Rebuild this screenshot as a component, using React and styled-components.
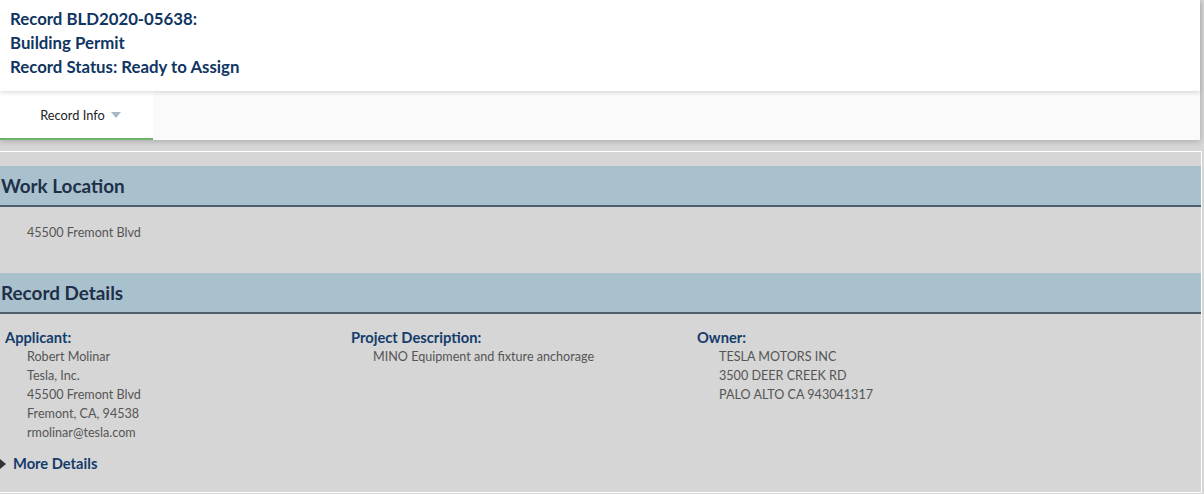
import React from 'react'
import styled, { createGlobalStyle } from 'styled-components'

const Global = createGlobalStyle`
  html, body { margin: 0; padding: 0; }
  body {
    background: #d6d6d6;
    font-family: Lato, "Open Sans", "Liberation Sans", sans-serif;
  }
`

const Page = styled.div`
  width: 1204px;
  height: 494px;
  overflow: hidden;
`

const TopCard = styled.div`
  width: 1200px;
  background: #fff;
  box-shadow: 0 1px 6px rgba(0, 0, 0, 0.22);
  position: relative;
  z-index: 2;
`

const Header = styled.div`
  height: 91px;
  box-sizing: border-box;
  padding: 7px 10px 0;
  background: #fff;
  box-shadow: 0 2px 4px rgba(0, 0, 0, 0.12);
  position: relative;
`

const HeaderLine = styled.div`
  font-size: 16.8px;
  line-height: 24px;
  font-weight: 700;
  color: #0f3562;
`

const TabBar = styled.div`
  display: flex;
  height: 49px;
  background: #fafafa;
`

const Tab = styled.div`
  width: 153px;
  box-sizing: border-box;
  display: flex;
  align-items: center;
  justify-content: center;
  gap: 6px;
  padding-left: 8px;
  background: ${(p) => (p.active ? '#fff' : 'transparent')};
  border-bottom: 2px solid ${(p) => (p.active ? '#6cb26e' : 'transparent')};
  font-size: 12.8px;
  color: #222;
`

const Caret = styled.span`
  width: 0;
  height: 0;
  border-left: 5px solid transparent;
  border-right: 5px solid transparent;
  border-top: 6px solid #a8b9c6;
  margin-top: 1px;
`

const Panel = styled.div`
  margin-top: 11px;
  width: 1202px;
  box-sizing: border-box;
  border: 1px solid #fff;
  border-left: none;
  padding-top: 14px;
  height: 342px;
`

const SectionHead = styled.div`
  height: 39px;
  background: #a9c0cd;
  border-bottom: 2px solid #4b5f6e;
  display: flex;
  align-items: center;
  padding-left: 1px;
  font-size: 18.9px;
  font-weight: 700;
  color: #1d3048;
`

const LocationBody = styled.div`
  padding: 16px 0 31px 27px;
  font-size: 12.6px;
  line-height: 19px;
  color: #555;
`

const Columns = styled.div`
  display: grid;
  grid-template-columns: 346px 346px 1fr;
  padding: 14px 0 0 5px;
`

const Column = styled.div``

const Label = styled.div`
  font-size: 14.7px;
  line-height: 19px;
  font-weight: 700;
  color: #143c6b;
`

const Value = styled.div`
  font-size: 12.6px;
  line-height: 19px;
  color: #555;
  padding-left: 22px;
`

const More = styled.div`
  display: flex;
  align-items: center;
  gap: 7px;
  margin-top: 12px;
  font-size: 14.7px;
  line-height: 19px;
  font-weight: 700;
  color: #143c6b;
`

const Arrow = styled.span`
  width: 0;
  height: 0;
  border-top: 5px solid transparent;
  border-bottom: 5px solid transparent;
  border-left: 6px solid #333;
`

const cols = [
  {
    label: 'Applicant:',
    lines: ['Robert Molinar', 'Tesla, Inc.', '45500 Fremont Blvd', 'Fremont, CA, 94538', 'rmolinar@tesla.com'],
  },
  { label: 'Project Description:', lines: ['MINO Equipment and fixture anchorage'] },
  { label: 'Owner:', lines: ['TESLA MOTORS INC', '3500 DEER CREEK RD', 'PALO ALTO CA 943041317'] },
]

export default function App() {
  return (
    <Page>
      <Global />
      <TopCard>
        <Header>
          <HeaderLine>Record BLD2020-05638:</HeaderLine>
          <HeaderLine>Building Permit</HeaderLine>
          <HeaderLine>Record Status: Ready to Assign</HeaderLine>
        </Header>
        <TabBar>
          <Tab active>
            Record Info <Caret />
          </Tab>
        </TabBar>
      </TopCard>
      <Panel>
        <SectionHead>Work Location</SectionHead>
        <LocationBody>45500 Fremont Blvd</LocationBody>
        <SectionHead>Record Details</SectionHead>
        <Columns>
          {cols.map((c) => (
            <Column key={c.label}>
              <Label>{c.label}</Label>
              {c.lines.map((l) => (
                <Value key={l}>{l}</Value>
              ))}
            </Column>
          ))}
        </Columns>
        <More>
          <Arrow />
          More Details
        </More>
      </Panel>
    </Page>
  )
}
